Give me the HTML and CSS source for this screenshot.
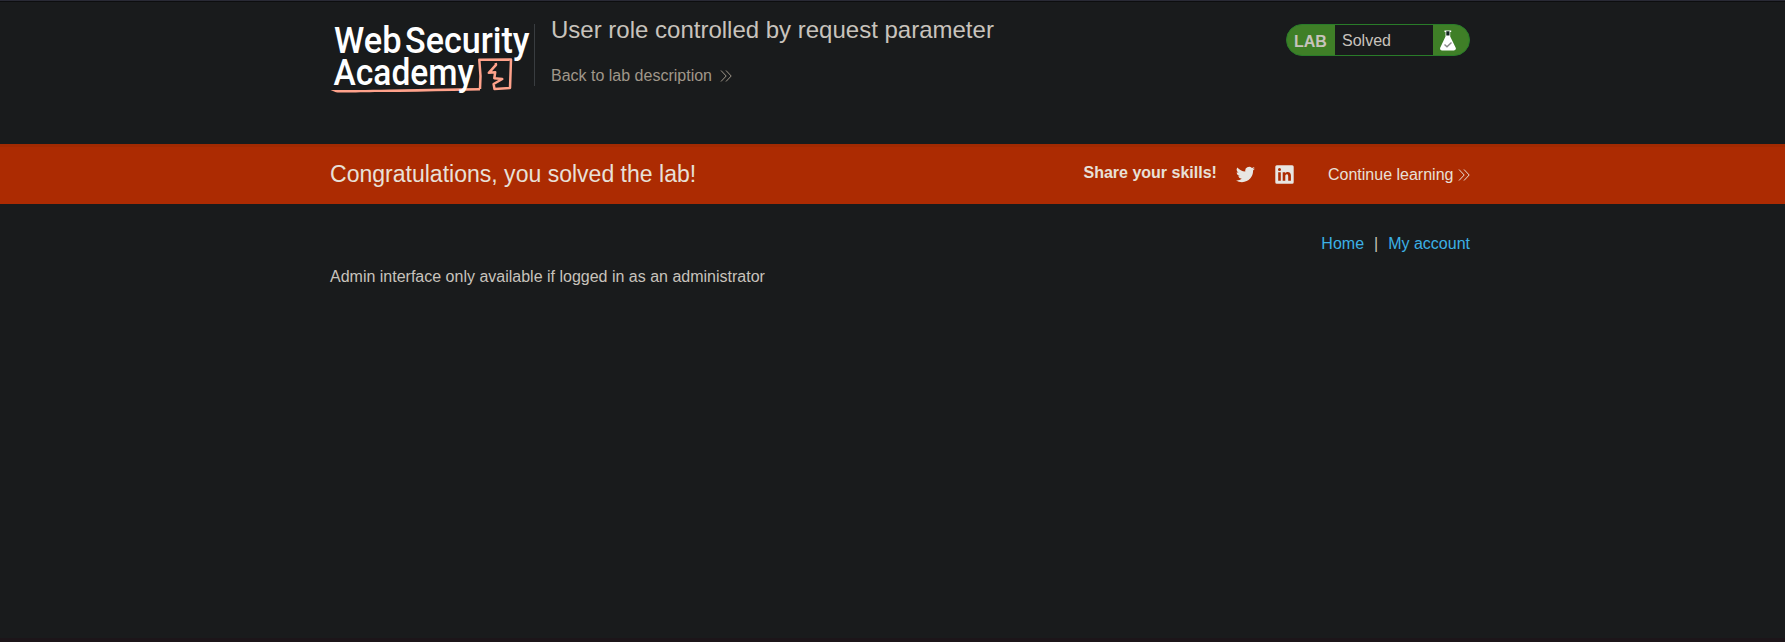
FILE: index.html
```html
<!DOCTYPE html>
<html lang="en">
<head>
<meta charset="utf-8">
<title>User role controlled by request parameter</title>
<link rel="stylesheet" href="styles.css">
</head>
<body>
<header class="lab-header">
  <div class="container header-row">
    <svg class="logo" width="204" height="76" viewBox="330 20 204 76" role="img" aria-label="Web Security Academy">
      <path class="logo-fill" d="M330.5 90C350 89.7 365 90.2 390 89.5L459 88.2 480 88 480 90.6 453 91C430 91.5 405 92 380 92 360 92.2 343 93 336 92.3Z"/>
      <path class="logo-line" d="M480 89L480.5 76 479.3 59.8 511 59.5 510.5 74 510 88 494.5 88.9 493.6 84 502.3 79 494.3 78.2 495.2 72.3 488.8 72.8 496 64.8 495.7 63"/>
      <g class="logo-text">
        <text x="334" y="52.8" textLength="67.5" lengthAdjust="spacingAndGlyphs">Web</text>
        <text x="405" y="52.8" textLength="124.5" lengthAdjust="spacingAndGlyphs">Security</text>
        <text x="333.5" y="85.2" textLength="140.5" lengthAdjust="spacingAndGlyphs">Academy</text>
      </g>
    </svg>
    <div class="title-block">
      <h2 class="title">User role controlled by request parameter</h2>
      <a class="back-link">Back to lab description
        <svg class="chevrons" width="13" height="14" viewBox="0 0 13 14"><path d="M1 1.5L6.2 7 1 12.5M6 1.5L11.2 7 6 12.5"/></svg>
      </a>
    </div>
    <div class="lab-status">
      <span class="lab-tag">LAB</span>
      <span class="lab-state">Solved</span>
      <span class="lab-icon">
        <svg width="16" height="21" viewBox="0 0 16 21"><path class="flask" d="M4.5.4H11.2V2H10.2V6.5L15.7 17.8Q16.5 20.3 14 20.4H2Q-.5 20.3.2 17.8L5.5 6.5V2H4.5Z"/><path class="flask-neck" d="M6.3 1.2H9.5V5.6H6.3Z"/><path class="flask-check" d="M4.5 14.5L7 16.8 11.5 12.6"/></svg>
      </span>
    </div>
  </div>
</header>
<section class="banner">
  <div class="container banner-row">
    <h4 class="congrats">Congratulations, you solved the lab!</h4>
    <span class="share">Share your skills!</span>
    <svg class="twitter" width="19" height="17" viewBox="0 2.3 24 19.5"><path d="M23.95 4.57a10 10 0 0 1-2.82.77 4.96 4.96 0 0 0 2.16-2.72c-.95.55-2 .95-3.13 1.18a4.92 4.92 0 0 0-8.38 4.48C7.69 8.1 4.07 6.13 1.64 3.16a4.93 4.93 0 0 0 1.52 6.57 4.9 4.9 0 0 1-2.23-.61v.06a4.92 4.92 0 0 0 3.95 4.83 5 5 0 0 1-2.21.08 4.94 4.94 0 0 0 4.6 3.42A9.87 9.87 0 0 1 0 19.54a13.99 13.99 0 0 0 7.56 2.21c9.05 0 14-7.5 14-13.98 0-.21 0-.42-.02-.63a9.94 9.94 0 0 0 2.46-2.55z"/></svg>
    <svg class="linkedin" width="19" height="19" viewBox="0 0 19 19"><path fill-rule="evenodd" d="M1.8.3H17.2Q18.7.3 18.7 1.8V17.2Q18.7 18.7 17.2 18.7H1.8Q.3 18.7.3 17.2V1.8Q.3.3 1.8.3ZM3.2 7.2V15.8H5.8V7.2ZM4.5 3A1.5 1.5 0 1 0 4.5 6 1.5 1.5 0 0 0 4.5 3ZM7.7 7.2V15.8H10.3V11.2C10.3 8.6 13.2 8.5 13.2 11.2V15.8H15.9V10.6C15.9 6.5 11.6 6.2 10.3 8.4V7.2Z"/></svg>
    <a class="continue">Continue learning<svg class="chevrons" width="13" height="14" viewBox="0 0 13 14"><path d="M1 1.5L6.2 7 1 12.5M6 1.5L11.2 7 6 12.5"/></svg></a>
  </div>
</section>
<main class="container">
  <nav class="nav"><a class="nav-link">Home</a><span>|</span><a class="nav-link">My account</a></nav>
  <p class="message">Admin interface only available if logged in as an administrator</p>
</main>
</body>
</html>
```
FILE: styles.css
```css
* { box-sizing: border-box; }
body {
  margin: 0;
  height: 642px;
  overflow: hidden;
  background: #191b1c;
  color: #c8c3bc;
  font: 16px/20px "Liberation Sans", Arial, sans-serif;
  border-top: 1px solid #292a35;
  border-bottom: 4px solid #1c1519;
}
.container { width: 1140px; margin: 0 auto 0 330px; }
.lab-header { height: 143px; border-top: 1px solid #0d0e0f; }
.header-row { display: flex; align-items: flex-start; padding-top: 18px; }
.logo { flex: none; overflow: visible; }
.logo-text { font: 500 37px Roboto, sans-serif; fill: #fff; }
.logo-fill { fill: #ffa28b; }
.logo-line { fill: none; stroke: #ffa28b; stroke-width: 2.5; stroke-linejoin: round; }
.title-block {
  flex: 1;
  height: 62px;
  margin-top: 4px;
  padding-left: 16px;
  border-left: 1px solid #393d40;
}
.title { margin: -8px 0 0; font-size: 24px; font-weight: 400; line-height: 28px; }
.back-link { display: flex; align-items: center; gap: 8px; margin-top: 22px; color: #a0978a; }
.chevrons { fill: none; stroke: currentColor; stroke-width: 1; }
.back-link .chevrons { margin-top: -1px; }
.lab-status {
  display: flex;
  width: 184px;
  height: 32px;
  margin-top: 4px;
  overflow: hidden;
  border: 1px solid #297c29;
  border-radius: 16px;
  background: #3f7f27;
}
.lab-tag { width: 48px; padding: 7px 0 0 7px; font-weight: 700; }
.lab-state { width: 98px; padding: 6px 0 0 7px; background: #191b1c; }
.lab-icon { padding: 5px 0 0 7px; }
.lab-icon svg { display: block; }
.flask { fill: #fff; }
.flask-neck { fill: #10241b; }
.flask-check { fill: none; stroke: #888; stroke-width: 1.4; }
.banner { height: 60px; border-top: 3px solid #a22a02; background: #ac2b02; color: #e8e0d8; }
.banner-row { display: flex; align-items: center; height: 57px; padding-bottom: 2px; }
.congrats { width: 753.5px; margin: -1px 0 0; font-size: 23.04px; font-weight: 400; line-height: 28px; }
.share { width: 152.5px; margin-top: -3px; font-weight: 700; }
.banner-row svg { flex: none; }
.twitter, .linkedin { fill: #e8e6e3; }
.linkedin { margin-left: 20px; }
.continue { display: flex; align-items: center; justify-content: space-between; width: 143px; margin-right: -1px; margin-left: auto; white-space: nowrap; }
.nav { display: flex; justify-content: flex-end; gap: 10px; padding-top: 30px; }
.nav-link { color: #3cb0e5; }
.message { margin: 13px 0 0; }
```
